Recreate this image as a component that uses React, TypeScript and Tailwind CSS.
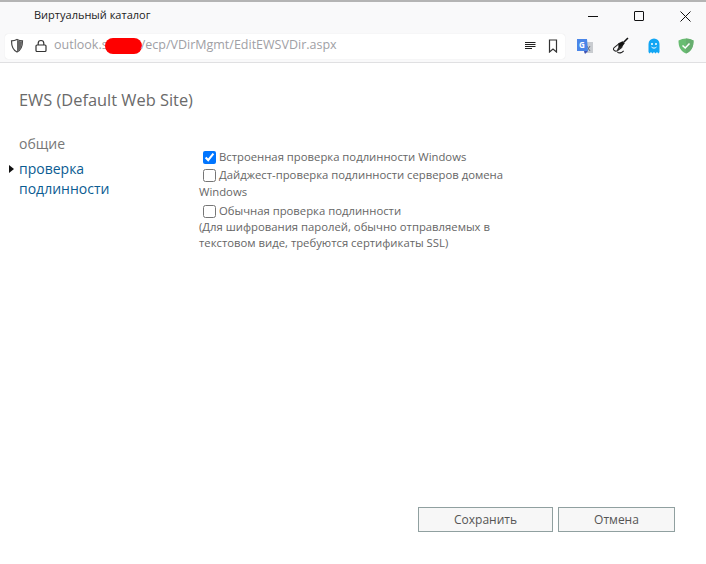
const font = "font-['Open_Sans','Noto_Sans',sans-serif]";

function TitleBar() {
  return (
    <div className="h-[28px] flex items-center justify-between bg-[#f9f9fa] pl-[34px]">
      <span className="text-[11px] text-[#222] -mt-[1px]">Виртуальный каталог</span>
      <div className="flex items-center -mr-[2px]">
        <div className="w-[46px] h-[28px] flex items-center justify-center">
          <div className="w-[10px] h-px bg-[#111]" />
        </div>
        <div className="w-[46px] h-[28px] flex items-center justify-center">
          <div className="w-[10px] h-[10px] border border-[#111] rounded-[1px]" />
        </div>
        <div className="w-[46px] h-[28px] flex items-center justify-center">
          <svg width="11" height="11" viewBox="0 0 11 11" fill="none" stroke="#111" strokeWidth="1">
            <path d="M0.5 0.5 10.5 10.5M10.5 0.5 0.5 10.5" />
          </svg>
        </div>
      </div>
    </div>
  );
}

function AddressBar() {
  return (
    <div className="h-[33px] flex items-center bg-[#f9f9fa] border-b border-[#e0e0e2] pl-[5px]">
      <div className="w-[560px] shrink-0 h-[25px] bg-white rounded-[3px] flex items-center pl-[4px] pr-[7px] shadow-[0_0_1px_rgba(0,0,0,0.15)]">
        <svg width="16" height="16" viewBox="0 0 16 16" fill="none" className="shrink-0">
          <path d="M8 1.500c2 1 3.500 1.300 5.500 1.300 0 5.500-1 9.200-5.500 11.200C3.500 12 2.500 8.300 2.500 2.800 4.500 2.800 6 2.500 8 1.500Z" stroke="#444" strokeWidth="1.200" />
          <path d="M8 2c1.800.9 3 1.200 5 1.300 0 5-1 8.300-5 10.100Z" fill="#666" />
        </svg>
        <svg width="14" height="14" viewBox="0 0 14 14" fill="none" className="shrink-0 ml-[9px]">
          <rect x="2" y="6" width="10" height="6.500" rx="1" stroke="#333" strokeWidth="1.200" />
          <path d="M4.200 6V4.300a2.800 2.800 0 0 1 5.600 0V6" stroke="#333" strokeWidth="1.200" />
        </svg>
        <div className="ml-[6px] -mt-[1px] flex items-center text-[12.500px] text-[#a0a0a5] whitespace-nowrap">
          <span>outlook.s</span>
          <span className="w-[37px] h-[16px] bg-[#fe0000] rounded-full -ml-[3px] -mr-[1px] mt-[1px]" />
          <span>/ecp/VDirMgmt/EditEWSVDir.aspx</span>
        </div>
        <div className="ml-auto flex items-center gap-[12px]">
          <svg width="12" height="10" viewBox="0 0 12 10" stroke="#222" strokeWidth="1">
            <path d="M1 1.500h10.500M1 3.500h10.500M1 5.500h10.500M1 7.500h7" />
          </svg>
          <svg width="10" height="14" viewBox="0 0 10 14" fill="none" stroke="#333" strokeWidth="1.200">
            <path d="M1.500 1h7v12L5 10l-3.500 3Z" />
          </svg>
        </div>
      </div>
      <div className="ml-[6px] flex items-center">
        <div className="w-[28px] flex justify-center">
          <svg width="18" height="17" viewBox="0 0 18 17">
            <rect x="8" y="4" width="9" height="11" fill="#c9ccd0" />
            <path d="M11 8l3 5M14 8l-3 5" stroke="#6b7280" strokeWidth="1" />
            <path d="M1 1h10l1 12H1Z" fill="#4a86e8" />
            <path d="M8 13h4l-3 3Z" fill="#3f51b5" />
            <text x="3" y="9.500" fontSize="8" fontWeight="700" fill="#fff">G</text>
          </svg>
        </div>
        <div className="w-[42px] flex justify-center">
          <svg width="17" height="18" viewBox="0 0 16 17" fill="none">
            <path d="M15 1 11 5" stroke="#111" strokeWidth="1.500" />
            <path d="M6 6l4-2 2 2-3 4-3 1Z" fill="#111" />
            <path d="M7 6 2 10c-2 2 1 4 3 3l4-3c1-1 0-2-1-1l-3 3" stroke="#222" strokeWidth="1" />
            <path d="M5 14c2 2 4 1 6-1" stroke="#222" strokeWidth="1" />
          </svg>
        </div>
        <div className="w-[25px] flex justify-center">
          <svg width="14" height="16" viewBox="0 0 13 16">
            <path d="M1 14V6a5.500 5.500 0 0 1 11 0v8l-1 1.500L9.500 14 8 15.500 6.500 14 5 15.500 3.500 14 2 15.500Z" fill="#12a6f4" />
            <circle cx="4.500" cy="6" r="1" fill="#fff" />
            <circle cx="8.500" cy="6" r="1" fill="#fff" />
            <path d="M4 9c1.500 1.500 3.500 1.500 5 0" stroke="#fff" strokeWidth="1" fill="none" />
          </svg>
        </div>
        <div className="w-[40px] flex justify-center">
          <svg width="16" height="16" viewBox="0 0 16 16">
            <path d="M8 .5c2.500 0 5 .8 7.500 2 0 6-1.500 10.500-7.500 13C2 13 .5 8.500.5 2.500 3 1.300 5.500.5 8 .5Z" fill="#68bc71" />
            <path d="M8 .5c2.500 0 5 .8 7.500 2 0 6-1.500 10.500-7.500 13Z" fill="#67ae6f" />
            <path d="M4.500 7.500 7.200 10 11.500 5.500" stroke="#fff" strokeWidth="1.500" fill="none" />
          </svg>
        </div>
      </div>
    </div>
  );
}

function AuthOptions() {
  return (
    <div className="w-[310px] text-[11.300px] leading-[17px] text-[#666]">
      <label className="block">
        <input type="checkbox" defaultChecked className="align-middle ml-[4px] mr-[3px] w-[13px] h-[13px]" />
        Встроенная проверка подлинности Windows
      </label>
      <label className="block mt-[1px]">
        <input type="checkbox" className="align-middle ml-[4px] mr-[3px] w-[13px] h-[13px]" />
        Дайджест-проверка подлинности серверов домена Windows
      </label>
      <label className="block mt-[2px]">
        <input type="checkbox" className="align-middle ml-[4px] mr-[3px] w-[13px] h-[13px]" />
        Обычная проверка подлинности
      </label>
      <p className="leading-[16px]">(Для шифрования паролей, обычно отправляемых в текстовом виде, требуются сертификаты SSL)</p>
    </div>
  );
}

export default function App() {
  return (
    <div className={`${font} w-[706px] h-[564px] flex flex-col bg-white border-t-2 border-[#b4b4b4] overflow-hidden`}>
      <TitleBar />
      <AddressBar />
      <main className="flex-1 flex flex-col">
        <h1 className="ml-[19px] mt-[25px] text-[16.400px] leading-[24px] text-[#6a6a6a]">EWS (Default Web Site)</h1>
        <div className="flex flex-1 mt-[22px]">
          <nav className="w-[199px] pl-[19px] pr-[60px] text-[14px] leading-[20px]">
            <div className="text-[#777] mb-[5px]">общие</div>
            <div className="relative text-[#0b5c92]">
              <span className="absolute -left-[10px] top-[6px] w-0 h-0 border-y-[4px] border-y-transparent border-l-[5px] border-l-[#111]" />
              проверка подлинности
            </div>
          </nav>
          <div className="pt-[14px]">
            <AuthOptions />
          </div>
        </div>
        <div className="flex justify-end gap-[5px] pr-[31px] pb-[32px]">
          <button className="w-[135px] h-[25px] bg-[#f7f7f7] border border-[#90a0a0] text-[12px] text-[#555]">Сохранить</button>
          <button className="w-[117px] h-[25px] bg-[#f7f7f7] border border-[#90a0a0] text-[12px] text-[#555]">Отмена</button>
        </div>
      </main>
    </div>
  );
}
